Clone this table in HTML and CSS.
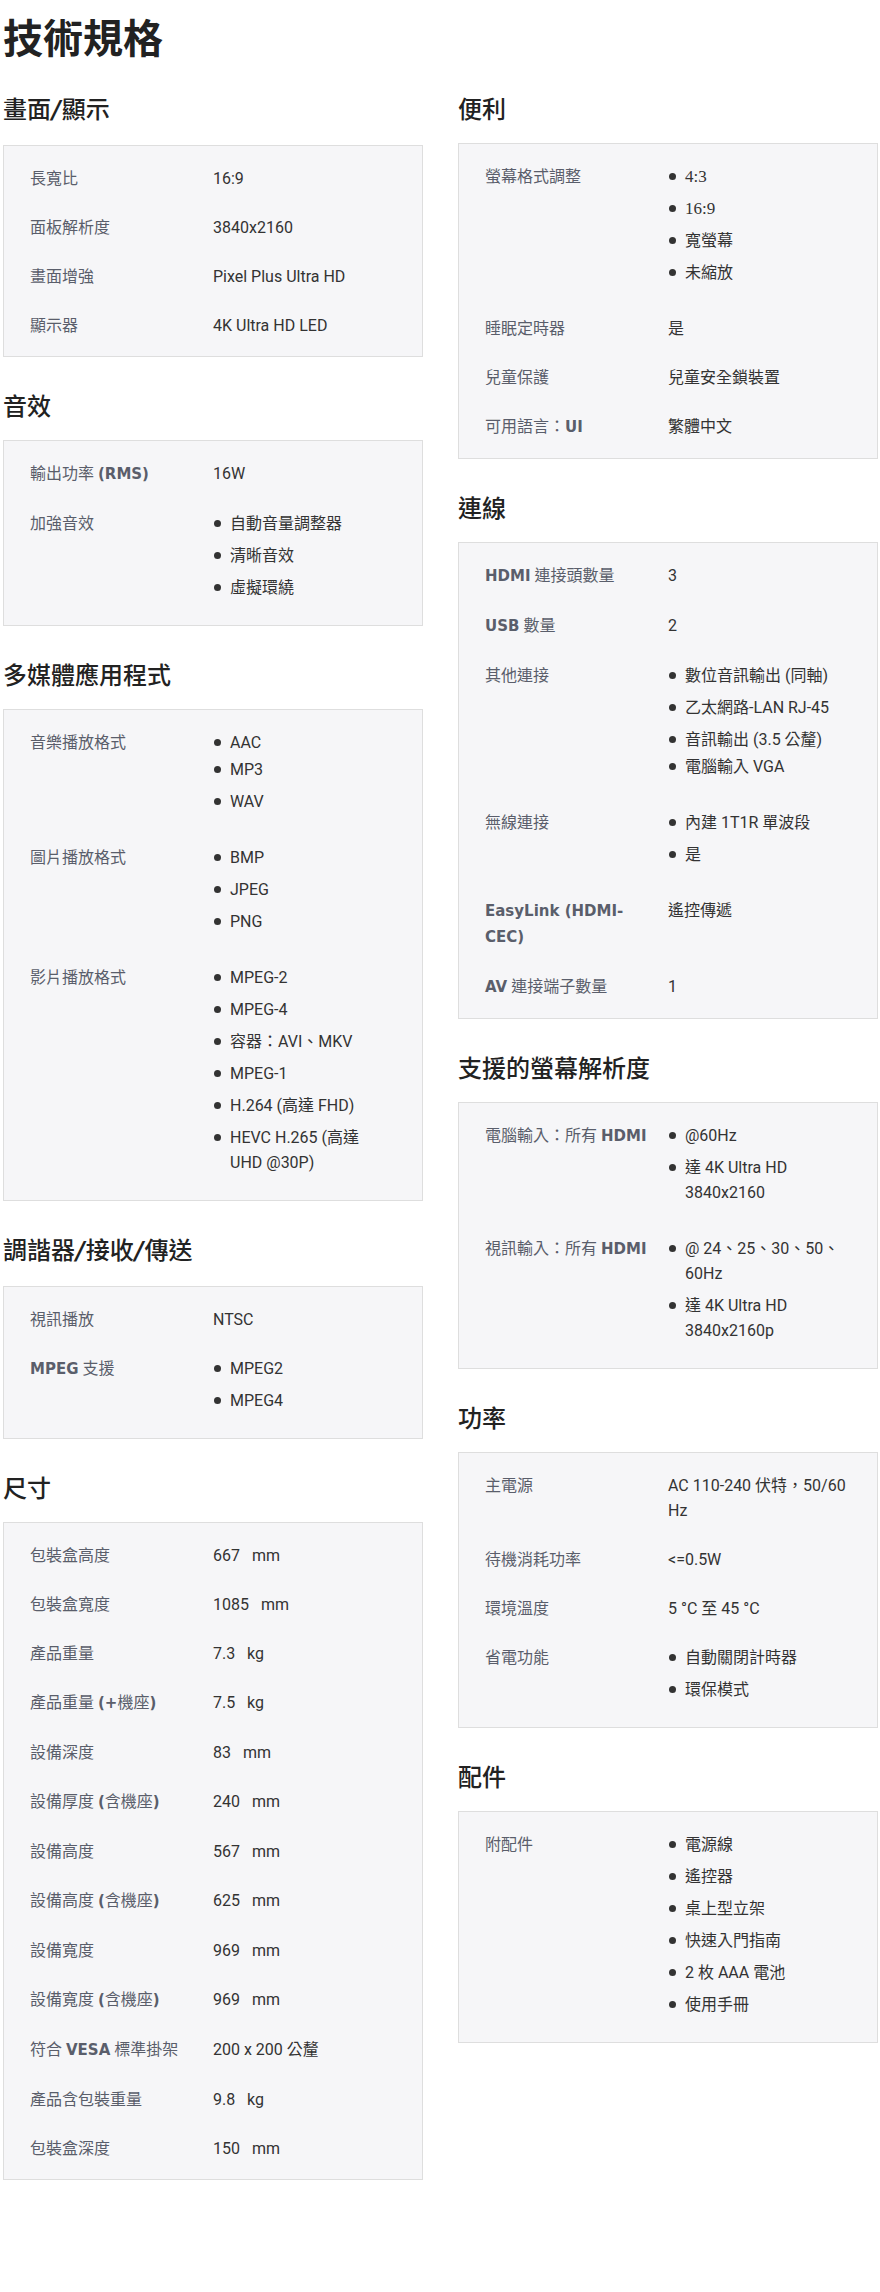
FILE: index.html
```html
<!DOCTYPE html>
<html lang="zh-Hant">
<head>
<meta charset="utf-8">
<title>技術規格</title>
<link rel="stylesheet" href="styles.css">
</head>
<body>
<div class="page">
  <h1 class="title">技術規格</h1>

  <div class="col">
    <h2 class="sec-h">畫面<span class="sl">/</span>顯示</h2>
    <div class="box">
      <div class="row"><div class="k">長寬比</div><div class="v">16:9</div></div>
      <div class="row"><div class="k">面板解析度</div><div class="v">3840x2160</div></div>
      <div class="row"><div class="k">畫面增強</div><div class="v">Pixel Plus Ultra HD</div></div>
      <div class="row"><div class="k">顯示器</div><div class="v">4K Ultra HD LED</div></div>
    </div>

    <h2 class="sec-h">音效</h2>
    <div class="box">
      <div class="row"><div class="k">輸出功率 <b>(RMS)</b></div><div class="v">16W</div></div>
      <div class="row"><div class="k">加強音效</div>
        <ul class="v list"><li>自動音量調整器</li><li>清晰音效</li><li>虛擬環繞</li></ul></div>
    </div>

    <h2 class="sec-h">多媒體應用程式</h2>
    <div class="box">
      <div class="row"><div class="k">音樂播放格式</div>
        <ul class="v list"><li>AAC</li><li class="tight">MP3</li><li>WAV</li></ul></div>
      <div class="row"><div class="k">圖片播放格式</div>
        <ul class="v list"><li>BMP</li><li>JPEG</li><li>PNG</li></ul></div>
      <div class="row"><div class="k">影片播放格式</div>
        <ul class="v list"><li>MPEG-2</li><li>MPEG-4</li><li>容器：AVI、MKV</li><li>MPEG-1</li><li>H.264 (高達 FHD)</li><li>HEVC H.265 (高達<br>UHD @30P)</li></ul></div>
    </div>

    <h2 class="sec-h">調諧器<span class="sl">/</span>接收<span class="sl">/</span>傳送</h2>
    <div class="box">
      <div class="row"><div class="k">視訊播放</div><div class="v">NTSC</div></div>
      <div class="row"><div class="k"><b>MPEG</b> 支援</div>
        <ul class="v list"><li>MPEG2</li><li>MPEG4</li></ul></div>
    </div>

    <h2 class="sec-h">尺寸</h2>
    <div class="box">
      <div class="row"><div class="k">包裝盒高度</div><div class="v">667&nbsp;&nbsp; mm</div></div>
      <div class="row"><div class="k">包裝盒寬度</div><div class="v">1085&nbsp;&nbsp; mm</div></div>
      <div class="row"><div class="k">產品重量</div><div class="v">7.3&nbsp;&nbsp; kg</div></div>
      <div class="row"><div class="k">產品重量 <b>(+</b>機座<b>)</b></div><div class="v">7.5&nbsp;&nbsp; kg</div></div>
      <div class="row"><div class="k">設備深度</div><div class="v">83&nbsp;&nbsp; mm</div></div>
      <div class="row"><div class="k">設備厚度 <b>(</b>含機座<b>)</b></div><div class="v">240&nbsp;&nbsp; mm</div></div>
      <div class="row"><div class="k">設備高度</div><div class="v">567&nbsp;&nbsp; mm</div></div>
      <div class="row"><div class="k">設備高度 <b>(</b>含機座<b>)</b></div><div class="v">625&nbsp;&nbsp; mm</div></div>
      <div class="row"><div class="k">設備寬度</div><div class="v">969&nbsp;&nbsp; mm</div></div>
      <div class="row"><div class="k">設備寬度 <b>(</b>含機座<b>)</b></div><div class="v">969&nbsp;&nbsp; mm</div></div>
      <div class="row"><div class="k">符合 <b>VESA</b> 標準掛架</div><div class="v">200 x 200 公釐</div></div>
      <div class="row"><div class="k">產品含包裝重量</div><div class="v">9.8&nbsp;&nbsp; kg</div></div>
      <div class="row"><div class="k">包裝盒深度</div><div class="v">150&nbsp;&nbsp; mm</div></div>
    </div>
  </div>

  <div class="col">
    <h2 class="sec-h">便利</h2>
    <div class="box">
      <div class="row"><div class="k">螢幕格式調整</div>
        <ul class="v list"><li><span class="serif">4:3</span></li><li><span class="serif">16:9</span></li><li>寬螢幕</li><li>未縮放</li></ul></div>
      <div class="row"><div class="k">睡眠定時器</div><div class="v">是</div></div>
      <div class="row"><div class="k">兒童保護</div><div class="v">兒童安全鎖裝置</div></div>
      <div class="row"><div class="k">可用語言：<b>UI</b></div><div class="v">繁體中文</div></div>
    </div>

    <h2 class="sec-h">連線</h2>
    <div class="box">
      <div class="row"><div class="k"><b>HDMI</b> 連接頭數量</div><div class="v">3</div></div>
      <div class="row"><div class="k"><b>USB</b> 數量</div><div class="v">2</div></div>
      <div class="row"><div class="k">其他連接</div>
        <ul class="v list"><li>數位音訊輸出 (同軸)</li><li>乙太網路-LAN RJ-45</li><li>音訊輸出 (3.5 公釐)</li><li class="tight">電腦輸入 VGA</li></ul></div>
      <div class="row"><div class="k">無線連接</div>
        <ul class="v list"><li>內建 1T1R 單波段</li><li>是</li></ul></div>
      <div class="row"><div class="k"><b>EasyLink (HDMI-<br>CEC)</b></div><div class="v">遙控傳遞</div></div>
      <div class="row"><div class="k"><b>AV</b> 連接端子數量</div><div class="v">1</div></div>
    </div>

    <h2 class="sec-h">支援的螢幕解析度</h2>
    <div class="box">
      <div class="row"><div class="k">電腦輸入：所有 <b>HDMI</b></div>
        <ul class="v list"><li>@60Hz</li><li>達 4K Ultra HD<br>3840x2160</li></ul></div>
      <div class="row"><div class="k">視訊輸入：所有 <b>HDMI</b></div>
        <ul class="v list"><li>@ 24、25、30、50、<br>60Hz</li><li>達 4K Ultra HD<br>3840x2160p</li></ul></div>
    </div>

    <h2 class="sec-h">功率</h2>
    <div class="box">
      <div class="row"><div class="k">主電源</div><div class="v">AC 110-240 伏特，50/60<br>Hz</div></div>
      <div class="row"><div class="k">待機消耗功率</div><div class="v">&lt;=0.5W</div></div>
      <div class="row"><div class="k">環境溫度</div><div class="v">5 °C 至 45 °C</div></div>
      <div class="row"><div class="k">省電功能</div>
        <ul class="v list"><li>自動關閉計時器</li><li>環保模式</li></ul></div>
    </div>

    <h2 class="sec-h">配件</h2>
    <div class="box">
      <div class="row"><div class="k">附配件</div>
        <ul class="v list"><li>電源線</li><li>遙控器</li><li>桌上型立架</li><li>快速入門指南</li><li>2 枚 AAA 電池</li><li>使用手冊</li></ul></div>
    </div>
  </div>
</div>
</body>
</html>
```

FILE: styles.css
```css
html, body {
  margin: 0;
  padding: 0;
  background: #ffffff;
}

body {
  font-family: Roboto, "Noto Sans CJK TC", sans-serif;
  color: #333333;
}

.page {
  display: grid;
  grid-template-columns: 420px 420px;
  column-gap: 35px;
  align-items: start;
  padding: 0 2px 0 3px;
}

.title {
  grid-column: 1 / -1;
  margin: 12px 0 0;
  font-family: "Noto Sans CJK TC", sans-serif;
  font-size: 40px;
  line-height: 48px;
  font-weight: 700;
  color: #222222;
}

.sec-h {
  margin: 32px 0 19px;
  font-family: "Noto Sans CJK TC", sans-serif;
  font-size: 24px;
  line-height: 32px;
  font-weight: 500;
  color: #222222;
}

.sec-h .sl {
  font-family: "DejaVu Sans", sans-serif;
  font-weight: 700;
  font-style: italic;
  margin: 0 1px;
}

.box {
  background: #f6f6f8;
  border: 1px solid #dedede;
  padding: 8px 27px 6px 26px;
}

.row {
  display: grid;
  grid-template-columns: 171px 1fr;
  column-gap: 12px;
  padding: 12px 0;
  font-size: 16px;
  line-height: 25px;
}

.k {
  color: #5a5e6b;
  white-space: nowrap;
}

.k b {
  font-family: "DejaVu Sans", sans-serif;
  font-size: 15px;
  font-weight: 700;
}

.v {
  color: #333333;
  white-space: nowrap;
}

.list {
  list-style: none;
  margin: 0;
  padding: 0;
}

.list li {
  position: relative;
  padding-left: 17px;
  margin-bottom: 7px;
}

.list li::before {
  content: "";
  position: absolute;
  left: 1px;
  top: 9px;
  width: 7px;
  height: 7px;
  border-radius: 50%;
  background: #333333;
}

.list li.tight {
  margin-top: -5px;
}

.serif {
  font-family: "Liberation Serif", serif;
  font-size: 17px;
}
```
